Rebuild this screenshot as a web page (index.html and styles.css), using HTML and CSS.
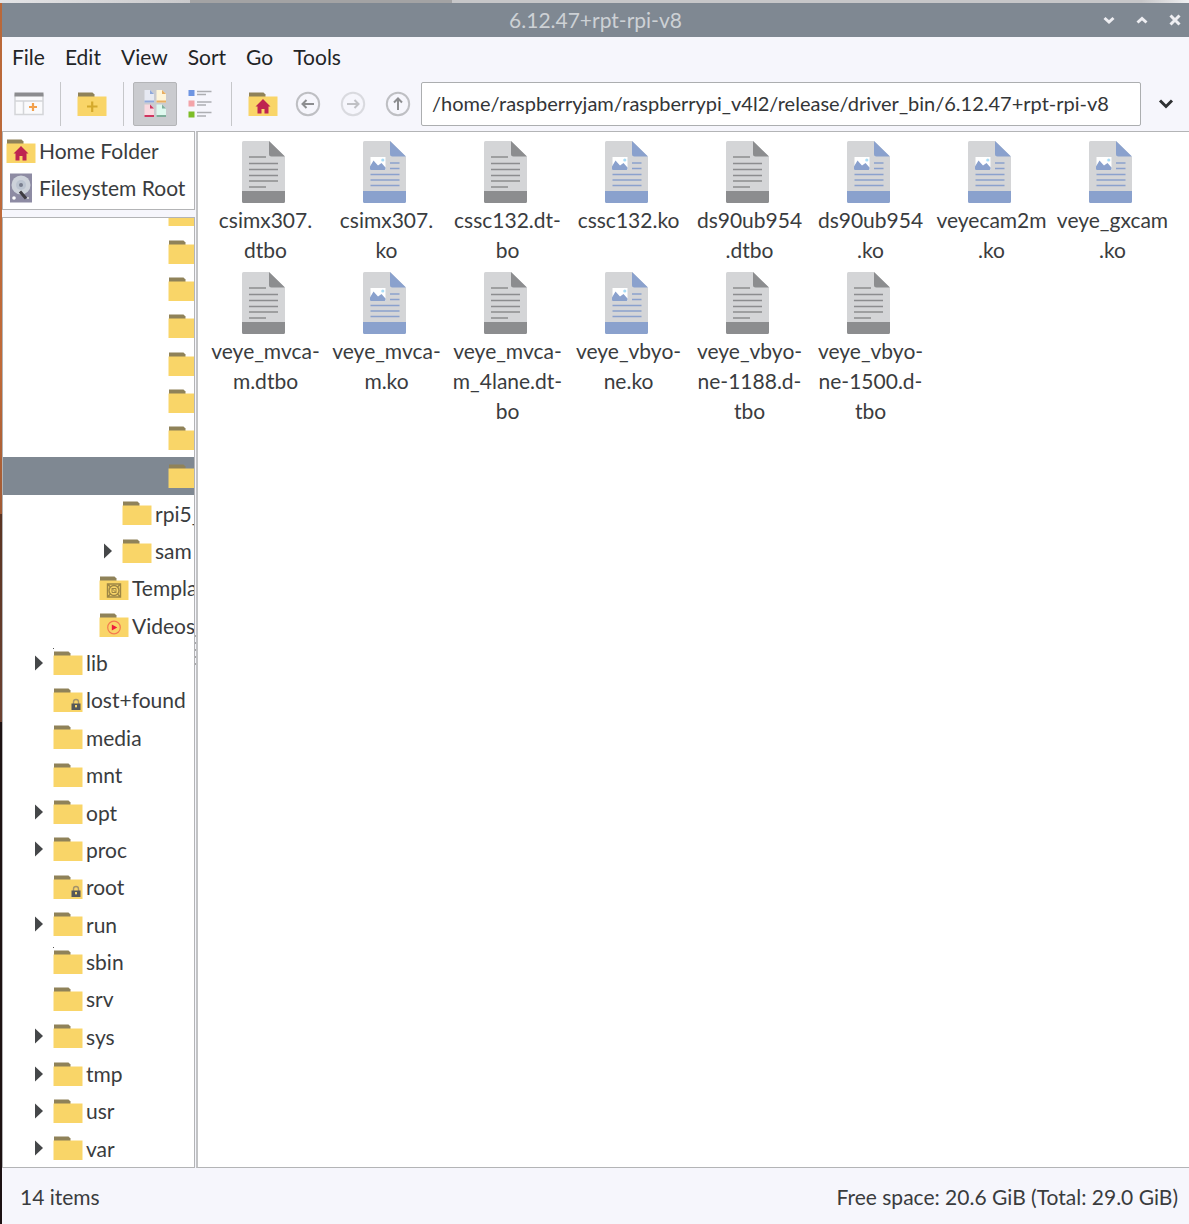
FILE: index.html
```
<!DOCTYPE html>
<html lang="en">
<head>
<meta charset="utf-8">
<title>6.12.47+rpt-rpi-v8</title>
<link rel="stylesheet" href="styles.css">
</head>
<body>
<svg class="sprites" width="0" height="0" aria-hidden="true">
  <symbol id="folder" viewBox="0 0 30 30">
    <path fill="#8f8259" d="M1 3.500h14.500l2 2V9H1z"/>
    <path fill="#f9d568" d="M.5 7.500h29v19.500H.5z"/>
  </symbol>
  <symbol id="house" viewBox="0 0 30 30">
    <path fill="#be2450" d="M15 10l7.500 7.500h-2V24.500h-4V20h-3v4.500h-4v-7h-2z"/>
  </symbol>
  <symbol id="lock" viewBox="0 0 30 30">
    <path fill="none" stroke="#a4936a" stroke-width="1.400" d="M20.500 19v-2a2.500 2.500 0 0 1 5 0v2"/>
    <path fill="#555759" d="M18.500 18.500h9V25h-9z"/>
    <path fill="#f9d568" d="M22 20h2v1.500l-1 1.500-1-1.500z"/>
  </symbol>
  <symbol id="arrow" viewBox="0 0 10 16"><path fill="#454749" d="M1 .5v15L9 8z"/></symbol>
  <symbol id="file-text" viewBox="0 0 48 62">
    <path fill="#d4d5d7" d="M1.500 0H27l16 16v45H0V1.500Q0 0 1.500 0z"/>
    <path fill="#8c8d8f" d="M27 0l16 15.500H29.500Q27 15.500 27 13zM0 50h43v10.500q0 1.500-1.500 1.500h-40Q0 62 0 60.500z"/>
    <path stroke="#8c8d8f" stroke-width="1.600" d="M7 16h17M7 22.500h29M7 28.500h29M7 34.500h29M7 40h29M7 46h17"/>
  </symbol>
  <symbol id="file-module" viewBox="0 0 48 62">
    <path fill="#d4d5d7" d="M1.500 0H27l16 16v45H0V1.500Q0 0 1.500 0z"/>
    <path fill="#8aa1cd" d="M27 0l16 15.500H29.500Q27 15.500 27 13zM0 50h43v10.500q0 1.500-1.500 1.500h-40Q0 62 0 60.500z"/>
    <path fill="#fff" d="M7.500 16h15v13h-15z"/>
    <circle cx="19.800" cy="19" r="1.600" fill="#a8dcf6"/>
    <path fill="#8aa1cd" d="M7 25.500l3.500-6 4.500 5 3.500-2.500 4 4.500v1.500q0 1-1 1H8q-1 0-1-1z"/>
    <path stroke="#8aa1cd" stroke-width="1.600" d="M27 22h9.500M27 27.500h9.500M7.500 33.500h29M7.500 39h29M7.500 44.500h29"/>
  </symbol>
</svg>

<main class="window">
  <header class="titlebar">
    <h1 class="title">6.12.47+rpt-rpi-v8</h1>
    <div class="window-buttons">
      <button type="button" aria-label="Minimize"><svg width="12" height="12" viewBox="0 0 12 12"><path d="M1.500 4L6 8l4.500-4"/></svg></button>
      <button type="button" aria-label="Maximize"><svg width="12" height="12" viewBox="0 0 12 12"><path d="M1.500 8.500L6 4.500l4.500 4"/></svg></button>
      <button type="button" aria-label="Close"><svg width="12" height="12" viewBox="0 0 12 12"><path d="M1.500 1.500l9 9M10.500 1.500l-9 9"/></svg></button>
    </div>
  </header>

  <nav class="menubar" aria-label="Menu">
    <button type="button">File</button>
    <button type="button">Edit</button>
    <button type="button">View</button>
    <button type="button">Sort</button>
    <button type="button">Go</button>
    <button type="button">Tools</button>
  </nav>

  <div class="toolbar">
    <button type="button" class="tool" aria-label="New tab">
      <svg width="30" height="30" viewBox="0 0 30 30"><path fill="#fafafc" stroke="#d4d5d8" stroke-width="1.500" d="M1 6h28v19.500H1zM1 12h28M9.500 12v13.500"/><path fill="#8c8c8f" d="M.5 3.500h29V7.500H.5z"/><path stroke="#f2a04c" stroke-width="2.200" d="M15 18h8M19 14v8"/></svg>
    </button>
    <span class="separator"></span>
    <button type="button" class="tool" aria-label="New folder">
      <svg width="30" height="30" viewBox="0 0 30 30"><use href="#folder"/><path stroke="#d4a92c" stroke-width="2.200" d="M10 17.500h10.500M15.200 12.500v10.500"/></svg>
    </button>
    <span class="separator"></span>
    <button type="button" class="tool pressed" aria-label="Icon view" aria-pressed="true">
      <svg width="30" height="30" viewBox="0 0 30 30">
        <path fill="#e6e9f2" d="M4.500 1h5.500l4 4v8.500H4.500z"/><path fill="#fff5d8" d="M16.500 1h5.500l4 4v8.500h-9.500z"/>
        <path fill="#f9d9e0" d="M4.500 15.500h5.500l4 4V28H4.500z"/><path fill="#dff9ef" d="M16.500 15.500h5.500l4 4V28h-9.500z"/>
        <path fill="#8fa8da" d="M4.500 11.500H14v2H4.500zM10 1l4 4h-4z"/><path fill="#e8ae62" d="M16.500 11.500H26v2h-9.500zM22 1l4 4h-4z"/>
        <path fill="#cf3560" d="M4.500 26H14v2H4.500zM10 15.500l4 4h-4z"/><path fill="#7fae9b" d="M16.500 26H26v2h-9.500zM22 15.500l4 4h-4z"/>
      </svg>
    </button>
    <button type="button" class="tool" aria-label="List view">
      <svg width="30" height="30" viewBox="0 0 30 30"><path fill="#6e95e2" d="M3.500 1h6v6h-6z"/><path fill="#f3a3a8" d="M3.500 11.500h6v6h-6z"/><path fill="#7dbd27" d="M3.500 22.500h6v6h-6z"/><path stroke="#adaeb2" stroke-width="1.500" d="M12 2.500h14.500M12 5.500h9M12 13h14.500M12 16h9M12 23.500h14.500M12 27h9"/></svg>
    </button>
    <span class="separator"></span>
    <button type="button" class="tool" aria-label="Home">
      <svg width="30" height="30" viewBox="0 0 30 30"><use href="#folder"/><use href="#house"/></svg>
    </button>
    <button type="button" class="tool" aria-label="Back">
      <svg class="round" width="26" height="26" viewBox="0 0 26 26"><circle cx="13" cy="13" r="11.200"/><path d="M19 13H8M11.500 9L7.500 13l4 4"/></svg>
    </button>
    <button type="button" class="tool" aria-label="Forward" disabled>
      <svg class="round" width="26" height="26" viewBox="0 0 26 26"><circle cx="13" cy="13" r="11.200"/><path d="M7 13h11M14.500 9l4 4-4 4"/></svg>
    </button>
    <button type="button" class="tool" aria-label="Up">
      <svg class="round" width="26" height="26" viewBox="0 0 26 26"><circle cx="13" cy="13" r="11.200"/><path d="M13 19V8M9 11.500l4-4 4 4"/></svg>
    </button>
    <input class="path" type="text" aria-label="Path" value="/home/raspberryjam/raspberrypi_v4l2/release/driver_bin/6.12.47+rpt-rpi-v8">
    <button type="button" class="history" aria-label="Path history"><svg width="16" height="12" viewBox="0 0 16 12"><path d="M2 2.500l6 6 6-6"/></svg></button>
  </div>

  <div class="panes">
    <aside class="sidebar">
      <ul class="places">
        <li><a href="#home"><svg class="place-icon" viewBox="0 0 30 30"><use href="#folder"/><use href="#house"/></svg>Home Folder</a></li>
        <li><a href="#root"><svg class="place-icon" viewBox="0 0 30 30"><path fill="#8d8ba3" d="M4 .5h22v29H4z"/><circle cx="15" cy="12" r="9.500" fill="#cdd2da"/><circle cx="15" cy="12" r="5" fill="#bcc4d0"/><circle cx="15" cy="12" r="2" fill="#777d8d"/><path stroke="#3f3c42" stroke-width="3" d="M14 18.500l6 7"/><circle cx="8" cy="25" r="1.800" fill="#fff"/><circle cx="22" cy="25" r="1" fill="#ddd"/></svg>Filesystem Root</a></li>
      </ul>
      <ul class="tree">
        <li class="level-6 cut"><a href="#d1" aria-label="Folder"><svg class="folder-icon"><use href="#folder"/></svg></a></li>
        <li class="level-6"><a href="#d2" aria-label="Folder"><svg class="folder-icon"><use href="#folder"/></svg></a></li>
        <li class="level-6"><a href="#d3" aria-label="Folder"><svg class="folder-icon"><use href="#folder"/></svg></a></li>
        <li class="level-6"><a href="#d4" aria-label="Folder"><svg class="folder-icon"><use href="#folder"/></svg></a></li>
        <li class="level-6"><a href="#d5" aria-label="Folder"><svg class="folder-icon"><use href="#folder"/></svg></a></li>
        <li class="level-6"><a href="#d6" aria-label="Folder"><svg class="folder-icon"><use href="#folder"/></svg></a></li>
        <li class="level-6"><a href="#d7" aria-label="Folder"><svg class="folder-icon"><use href="#folder"/></svg></a></li>
        <li class="level-6 selected"><a href="#d8" aria-label="6.12.47+rpt-rpi-v8"><svg class="folder-icon"><use href="#folder"/></svg></a></li>
        <li class="level-4"><a href="#rpi5"><svg class="folder-icon"><use href="#folder"/></svg>rpi5_</a></li>
        <li class="level-4"><button type="button" aria-label="Expand"><svg width="10" height="16"><use href="#arrow"/></svg></button><a href="#sam"><svg class="folder-icon"><use href="#folder"/></svg>sam</a></li>
        <li class="level-3"><a href="#templates"><svg class="folder-icon" viewBox="0 0 30 30"><use href="#folder"/><path fill="none" stroke="#9c8544" stroke-width="1.400" d="M8.500 11h13v13h-13zM8.500 11l13 13M21.500 11l-13 13"/><circle cx="15" cy="17.500" r="5" fill="#f9d568" stroke="#9c8544" stroke-width="1.400"/><path fill="none" stroke="#9c8544" d="M13 15.500h4v4h-4zM13 15.500l4 4"/></svg>Templa</a></li>
        <li class="level-3"><a href="#videos"><svg class="folder-icon" viewBox="0 0 30 30"><use href="#folder"/><circle cx="15" cy="17.500" r="6.300" fill="none" stroke="#f47b4f" stroke-width="1.200"/><path fill="#ee1c3c" d="M12.800 14.500v6l5.500-3z"/></svg>Videos</a></li>
        <li class="level-1"><button type="button" aria-label="Expand"><svg width="10" height="16"><use href="#arrow"/></svg></button><a href="#lib"><svg class="folder-icon" viewBox="0 0 30 30"><use href="#folder"/><path fill="#555" d="M0 0h1v1H0z"/></svg>lib</a></li>
        <li class="level-1"><a href="#lost"><svg class="folder-icon" viewBox="0 0 30 30"><use href="#folder"/><use href="#lock"/></svg>lost+found</a></li>
        <li class="level-1"><a href="#media"><svg class="folder-icon"><use href="#folder"/></svg>media</a></li>
        <li class="level-1"><a href="#mnt"><svg class="folder-icon"><use href="#folder"/></svg>mnt</a></li>
        <li class="level-1"><button type="button" aria-label="Expand"><svg width="10" height="16"><use href="#arrow"/></svg></button><a href="#opt"><svg class="folder-icon"><use href="#folder"/></svg>opt</a></li>
        <li class="level-1"><button type="button" aria-label="Expand"><svg width="10" height="16"><use href="#arrow"/></svg></button><a href="#proc"><svg class="folder-icon"><use href="#folder"/></svg>proc</a></li>
        <li class="level-1"><a href="#rootdir"><svg class="folder-icon" viewBox="0 0 30 30"><use href="#folder"/><use href="#lock"/></svg>root</a></li>
        <li class="level-1"><button type="button" aria-label="Expand"><svg width="10" height="16"><use href="#arrow"/></svg></button><a href="#run"><svg class="folder-icon"><use href="#folder"/></svg>run</a></li>
        <li class="level-1"><a href="#sbin"><svg class="folder-icon" viewBox="0 0 30 30"><use href="#folder"/><path fill="#555" d="M0 0h1v1H0z"/></svg>sbin</a></li>
        <li class="level-1"><a href="#srv"><svg class="folder-icon"><use href="#folder"/></svg>srv</a></li>
        <li class="level-1"><button type="button" aria-label="Expand"><svg width="10" height="16"><use href="#arrow"/></svg></button><a href="#sys"><svg class="folder-icon"><use href="#folder"/></svg>sys</a></li>
        <li class="level-1"><button type="button" aria-label="Expand"><svg width="10" height="16"><use href="#arrow"/></svg></button><a href="#tmp"><svg class="folder-icon"><use href="#folder"/></svg>tmp</a></li>
        <li class="level-1"><button type="button" aria-label="Expand"><svg width="10" height="16"><use href="#arrow"/></svg></button><a href="#usr"><svg class="folder-icon"><use href="#folder"/></svg>usr</a></li>
        <li class="level-1"><button type="button" aria-label="Expand"><svg width="10" height="16"><use href="#arrow"/></svg></button><a href="#var"><svg class="folder-icon"><use href="#folder"/></svg>var</a></li>
      </ul>
    </aside>
    <div class="splitter" role="separator" aria-orientation="vertical"><span class="grip"></span></div>
    <ul class="files">
      <li><svg class="file-icon"><use href="#file-text"/></svg><span>csimx307.<br>dtbo</span></li>
      <li><svg class="file-icon"><use href="#file-module"/></svg><span>csimx307.<br>ko</span></li>
      <li><svg class="file-icon"><use href="#file-text"/></svg><span>cssc132.dt-<br>bo</span></li>
      <li><svg class="file-icon"><use href="#file-module"/></svg><span>cssc132.ko</span></li>
      <li><svg class="file-icon"><use href="#file-text"/></svg><span>ds90ub954<br>.dtbo</span></li>
      <li><svg class="file-icon"><use href="#file-module"/></svg><span>ds90ub954<br>.ko</span></li>
      <li><svg class="file-icon"><use href="#file-module"/></svg><span>veyecam2m<br>.ko</span></li>
      <li><svg class="file-icon"><use href="#file-module"/></svg><span>veye_gxcam<br>.ko</span></li>
      <li><svg class="file-icon"><use href="#file-text"/></svg><span>veye_mvca-<br>m.dtbo</span></li>
      <li><svg class="file-icon"><use href="#file-module"/></svg><span>veye_mvca-<br>m.ko</span></li>
      <li><svg class="file-icon"><use href="#file-text"/></svg><span>veye_mvca-<br>m_4lane.dt-<br>bo</span></li>
      <li><svg class="file-icon"><use href="#file-module"/></svg><span>veye_vbyo-<br>ne.ko</span></li>
      <li><svg class="file-icon"><use href="#file-text"/></svg><span>veye_vbyo-<br>ne-1188.d-<br>tbo</span></li>
      <li><svg class="file-icon"><use href="#file-text"/></svg><span>veye_vbyo-<br>ne-1500.d-<br>tbo</span></li>
    </ul>
  </div>

  <footer class="statusbar"><span>14 items</span><span>Free space: 20.6 GiB (Total: 29.0 GiB)</span></footer>
</main>
</body>
</html>
```
FILE: styles.css
```
* { box-sizing: border-box; }

body {
  margin: 0;
  height: 100vh;
  padding: 3px 0 0 2px;
  display: flex;
  background:
    linear-gradient(90deg, #e4e4e6, #c9c9cb 16%, #a3a3a4 16%, #a3a3a4 38%, #c6c6c8 38%, #c6c6c8 96%, #efeff1) top / 100% 3px no-repeat,
    linear-gradient(#b9683a, #c06a38 30%, #a05a34 42%, #5a3422 42%, #6b4030 59%, #1c1112 59%, #1c1112);
  font: 21px "Lato", sans-serif;
  color: #3a3c3e;
}

ul { margin: 0; padding: 0; list-style: none; }

a { color: inherit; text-decoration: none; }

button {
  padding: 0;
  border: 0;
  background: none;
  color: inherit;
  font: inherit;
}

svg { flex: none; }

.sprites { position: absolute; }

.window {
  flex: 1;
  min-width: 0;
  display: flex;
  flex-direction: column;
  background: #f6f6fc;
}

.titlebar {
  display: grid;
  grid-template-columns: 1fr auto 1fr;
  align-items: center;
  height: 34px;
  background: #7f8892;
  color: #cdd1d5;
}

.title {
  grid-column: 2;
  margin: 0;
  padding-bottom: 2px;
  font-size: 21px;
  font-weight: 400;
}

.window-buttons {
  display: flex;
  justify-content: flex-end;
  gap: 21px;
  padding-right: 8px;
}

.window-buttons button { display: flex; }

.window-buttons path {
  fill: none;
  stroke: #eeeef2;
  stroke-width: 3;
}

.menubar {
  display: flex;
  gap: 20px;
  height: 42px;
  padding: 0 0 4px 10px;
  color: #222426;
}

.toolbar {
  display: flex;
  align-items: center;
  gap: 1px;
  padding: 3px 0 5px 5px;
}

.tool {
  flex: none;
  display: flex;
  align-items: center;
  justify-content: center;
  width: 44px;
  height: 44px;
}

.pressed {
  border: 1px solid #b4b5b8;
  border-radius: 2px;
  background: #cacbcf;
}

.separator {
  width: 1px;
  height: 44px;
  margin: 0 8px;
  background: #c6c7ca;
}

.round { fill: none; stroke: #8c8d90; stroke-width: 2; }
.round circle { stroke: #bebfc3; stroke-width: 2; }
.tool:disabled .round { opacity: .5; }

.path {
  flex: 1;
  min-width: 0;
  height: 44px;
  padding: 0 10px 2px;
  border: 1px solid #acaeb0;
  border-radius: 2px;
  background: #fff;
  color: #333537;
  font: 20px "Lato", sans-serif;
}

.history {
  display: flex;
  justify-content: center;
  width: 47px;
}

.history path { fill: none; stroke: #2f3133; stroke-width: 3; }

.panes {
  flex: 1;
  min-height: 0;
  display: flex;
}

.sidebar {
  width: 193px;
  display: flex;
  flex-direction: column;
  gap: 7px;
}

.places, .tree {
  border: 1px solid #b3b4b6;
  background: #fff;
  overflow: hidden;
}

.places { padding-bottom: 3px; }

.places a {
  display: flex;
  align-items: center;
  gap: 3px;
  height: 37px;
  padding-left: 3px;
  white-space: nowrap;
}

.place-icon { width: 30px; height: 30px; }

.tree {
  flex: 1;
  min-height: 0;
  display: flex;
  flex-direction: column;
}

.tree li {
  flex: 1;
  min-height: 0;
  display: flex;
  align-items: center;
  justify-content: flex-start;
}

.tree a {
  display: flex;
  align-items: center;
  gap: 3px;
  white-space: nowrap;
}

.tree button {
  display: flex;
  width: 19px;
  margin-left: -19px;
}

.tree .cut {
  flex: 0 0 15px;
  align-items: flex-end;
  padding-bottom: 4px;
  overflow: hidden;
}

.tree .selected { background: #7f8892; }

.level-1 { padding-left: 50px; }
.level-3 { padding-left: 96px; }
.level-4 { padding-left: 119px; }
.level-6 { padding-left: 165px; }

.folder-icon { width: 30px; height: 30px; }

.splitter {
  display: flex;
  align-items: center;
  width: 1px;
}

.grip {
  flex: none;
  width: 2px;
  height: 30px;
  background: repeating-linear-gradient(#a6a7aa 0 2px, #f6f6fc 2px 7px);
}

.files {
  flex: 1;
  min-width: 0;
  display: grid;
  grid-template-columns: repeat(auto-fill, 121px);
  align-content: start;
  row-gap: 7px;
  padding: 9px 0 0 7px;
  border: 1px solid #b3b4b6;
  border-right: 0;
  border-left: 2px solid #c2c3c5;
  background: #fff;
  overflow: hidden;
}

.files li {
  display: flex;
  flex-direction: column;
  align-items: center;
  gap: 2px;
  line-height: 30px;
  text-align: center;
  white-space: nowrap;
}

.file-icon { width: 48px; height: 62px; }

.statusbar {
  display: flex;
  justify-content: space-between;
  align-items: center;
  height: 56px;
  padding: 0 11px 0 18px;
}
```
